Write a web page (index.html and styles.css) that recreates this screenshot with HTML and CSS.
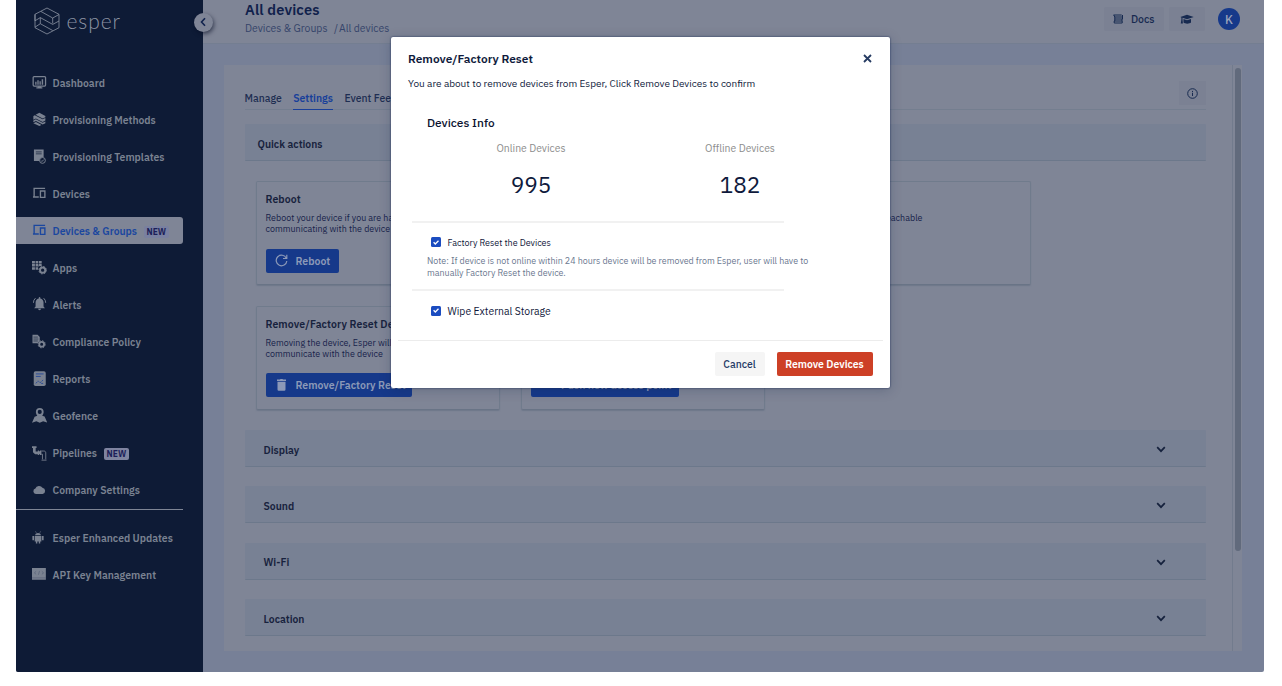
FILE: index.html
```html
<!DOCTYPE html>
<html lang="en">
<head>
<meta charset="utf-8">
<title>Esper - All devices</title>
<link rel="stylesheet" href="styles.css">
</head>
<body>
<div class="app">
  <aside class="sidebar">
    <div class="logo">
      <svg width="26" height="28" viewBox="0 0 26 28" fill="none" stroke="#8d94a3" stroke-width=".8" stroke-linejoin="round"><path d="M1 7.300 13 1l12 6.300v13.400L13 27 1 20.700zM7 4.500l11.700 6.500L25 7.500M18.700 11v5.500M1 7.300v6.500l5.300-3.200 12.400 6.800L25 14M6.300 10.600v6.100M1 20.200l5.300-3.500 12.400 6.800"/></svg>
      <span class="logo-text">esper</span>
    </div>
    <button class="collapse"><svg width="8" height="10" viewBox="0 0 8 10" fill="none" stroke="#10224d" stroke-width="1.600"><path d="M6 1.200 2.500 5 6 8.800"/></svg></button>
    <nav class="nav">
      <a class="item"><svg class="ico" viewBox="0 0 16 16"><rect x="1.200" y="1.600" width="12.800" height="9.800" rx="1" fill="none" stroke="currentColor" stroke-width="1.300"/><path fill="currentColor" d="M3.300 7h1.400v3H3.300zM5.500 5.500h1.400V10H5.500zM7.700 6.500h1.400V10H7.700zM10 4.300h1.500V10H10zM6 11.500h3.500v1.200H6zM4.500 12.700h6.200v1.200H4.500z"/></svg>Dashboard</a>
      <a class="item"><svg class="ico" viewBox="0 0 16 16"><path fill="currentColor" d="M7.600.8 13.800 4v1.300L11 6.600 3.700 2.900zM1.400 4.200l1.500-.8 8 4.100 2.900-1.300v2.700L11 10.300 4 6.700 1.400 8zM1.400 8.900 4 7.600l7 3.600 2.800-1.300v1.600L11 12.900 4.100 9.400l-2.700 1.300zM1.400 11.500l2.700-1.200 5.700 3-2.200 1.100z"/></svg>Provisioning Methods</a>
      <a class="item"><svg class="ico" viewBox="0 0 16 16"><path fill="currentColor" d="M2 .5h10v8.300a3.500 3.500 0 0 0-4 2.200v1.500H2z"/><path stroke="#0e1b36" stroke-width=".7" d="M4 3h6M4 5h6"/><circle cx="10.800" cy="11.800" r="3" fill="#0e1b36" stroke="currentColor"/><path d="m9.300 11.900 1 1 2-2" fill="none" stroke="currentColor"/></svg>Provisioning Templates</a>
      <a class="item"><svg class="ico" viewBox="0 0 16 16" fill="none" stroke="currentColor" stroke-width="1.400"><path d="M13.500 2.500H2.200v8.300M1 11.300h6"/><path d="M8.700 5.200h4.600v6.600H8.700z"/></svg>Devices</a>
      <a class="item active"><svg class="ico" viewBox="0 0 16 16" fill="none" stroke="currentColor" stroke-width="1.400"><path d="M13.500 2.500H2.200v8.300M1 11.300h6"/><path d="M8.700 5.200h4.600v6.600H8.700z"/></svg>Devices &amp; Groups<span class="tag tag-soft">NEW</span></a>
      <a class="item"><svg class="ico" viewBox="0 0 16 16"><path fill="currentColor" d="M0 1h3v2.500H0zM3.700 1h2.600v2.500H3.700zM7 1h3v2.500H7zM0 4.200h3v2.500H0zM3.700 4.200h2.600v2.500H3.700zM7 4.200h3v2H8L6.500 7zM0 7.400h3V10H0zM3.700 7.400h2.600V10H3.700z"/><circle cx="11" cy="10.500" r="2.700" fill="none" stroke="currentColor" stroke-width="2"/><circle cx="11" cy="10.500" r="3.900" fill="none" stroke="currentColor" stroke-dasharray="1.500 1.600"/></svg>Apps</a>
      <a class="item"><svg class="ico" viewBox="0 0 16 16"><path fill="currentColor" d="M7 .8a.8.8 0 0 1 1.600 0v.7c2.200.5 3.300 2.200 3.300 4.300v4l1.500 1.700H2.200L3.700 9.800v-4c0-2.100 1.100-3.800 3.300-4.300zM6.300 12.200h3a1.500 1.500 0 0 1-3 0z"/><path fill="none" stroke="currentColor" d="M3.600 1.200A6 6 0 0 0 1.500 6M12 1.200A6 6 0 0 1 14.100 6"/></svg>Alerts</a>
      <a class="item"><svg class="ico" viewBox="0 0 16 16"><path fill="currentColor" d="M.5.800h5.300L8 3v4L5.800 9.500H.5z"/><path stroke="#0e1b36" stroke-width=".6" d="M1.500 3.200H6M1.500 5.200h5M1.500 7.200H6"/><circle cx="10" cy="10.600" r="2.500" fill="none" stroke="currentColor" stroke-width="1.900"/><circle cx="10" cy="10.600" r="3.700" fill="none" stroke="currentColor" stroke-dasharray="1.500 1.400"/></svg>Compliance Policy</a>
      <a class="item"><svg class="ico" viewBox="0 0 16 16"><rect x="1.800" y=".2" width="12.400" height="15.300" rx="1.800" fill="currentColor"/><path fill="none" stroke="#294b98" d="M4 3h8M4 5.600h5"/><path fill="none" stroke="#294b98" stroke-dasharray="2 .8" d="m4 12.800 2.300-2.600 2 2L12 8.800M9.500 12.800H12"/></svg>Reports</a>
      <a class="item"><svg class="ico" viewBox="0 0 16 16"><path fill="currentColor" fill-rule="evenodd" d="M8 0a4 4 0 0 1 4 4c0 1.500-.7 2.700-1.500 4l2.500.8 2.800 6.400-4.300-1.500L8 15.200l-3.500-1.500L0 15.200 2.700 9l2.800-1C4.700 6.700 4 5.500 4 4a4 4 0 0 1 4-4zm0 1.900a2.100 2.100 0 1 0 0 4.200 2.100 2.100 0 0 0 0-4.200z"/></svg>Geofence</a>
      <a class="item"><svg class="ico" viewBox="0 0 16 16"><path fill="currentColor" d="M0 .3h4.700v1.800h-.9v3.500H6V4.700h1.200v.6h1v-.6h1.500v4.500H8.200v-.6h-1v.6H6v-.6H3.200L1 6.500V2.100H0z"/><path fill="none" stroke="currentColor" stroke-width=".9" d="M9.700 5.200h2.500c1.400 0 2 .7 2 2v6.600M9.700 8.500h1.100v5.300M9.800 14.600h5.200"/></svg>Pipelines<span class="tag">NEW</span></a>
      <a class="item"><svg class="ico" viewBox="0 0 16 16"><path fill="currentColor" d="M4 11.300a2.800 2.800 0 0 1-.5-5.500A4 4 0 0 1 10.800 5 3.200 3.200 0 0 1 11 11.300z"/></svg>Company Settings</a>
    </nav>
    <nav class="nav nav-extra">
      <a class="item"><svg class="ico" viewBox="0 0 16 16"><path fill="currentColor" d="M3 4.500a3.300 3.300 0 0 1 6.400 0zM2.800 5.200h6.900v5.600H8.500V13H7v-2.200H5.500V13H4v-2.200H2.800zM.4 5.200h1.700v4.300H.4zM10.300 5.200H12v4.300h-1.700z"/><path stroke="currentColor" stroke-width=".5" d="m3.500.2 1 1.800M9 .2 8 2"/></svg>Esper Enhanced Updates</a>
      <a class="item"><svg class="ico" viewBox="0 0 16 16"><path fill="currentColor" d="M0 0h14.300v12H0z"/><path fill="none" stroke="#566177" stroke-width=".7" d="M4.200 3.500 2.500 5l1.700 1.500M10.200 3.500 11.900 5l-1.700 1.500M7.800 3 6.600 7M0 10.200h14.300"/></svg>API Key Management</a>
    </nav>
  </aside>

  <main class="main">
    <header class="header">
      <div>
        <h1>All devices</h1>
        <div class="crumbs"><span>Devices &amp; Groups</span><span class="slash">/</span><span>All devices</span></div>
      </div>
      <div class="tools">
        <button class="tool docs"><svg width="10" height="10" viewBox="0 0 10 10" fill="none" stroke="#172a50" stroke-width="1"><path d="M.5 1h8.200M.8 1l1 2h8M9.500 1v4M1.800 3v2h7.700M1.800 5v2M9 5v2M1 7h8M1.200 7v2h8V7"/></svg>Docs</button>
        <button class="tool cap"><svg width="14" height="11" viewBox="0 0 14 11" fill="#172a50"><path d="M7 .8 13.700 3 7 5.300 2.500 3.800v1.500l.4 4.200H.8l.6-4.200V3.500L.3 3zM3.500 5 7 6.300 11 5v3.500C9.500 10 5 10 3.500 8.500z"/></svg></button>
        <span class="avatar">K</span>
      </div>
    </header>
    <div class="panel">
      <div class="content">
        <div class="tabs">
          <span class="tab">Manage</span><span class="tab selected">Settings</span><span class="tab">Event Feed</span>
          <button class="info"><svg width="11" height="11" viewBox="0 0 11 11" fill="none" stroke="#172a50"><circle cx="5.500" cy="5.500" r="4.800"/><path d="M5.500 4.800V8M5.500 2.900v1.200"/></svg></button>
        </div>
        <div class="bar quick">Quick actions</div>
        <div class="cards">
          <section class="card"><h3>Reboot</h3><p>Reboot your device if you are having trouble communicating with the device</p><button class="action"><svg width="13" height="13" viewBox="0 0 13 13" fill="none" stroke="currentColor" stroke-width="1.200"><path d="M11.300 4.200A5.300 5.300 0 1 0 11.800 7M11.800.8v3.700H8"/></svg>Reboot</button></section>
          <section class="card"></section>
          <section class="card"><h3>Ping</h3><p>Check if the device is reachable</p></section>
          <section class="card"><h3>Remove/Factory Reset Device</h3><p>Removing the device, Esper will no longer communicate with the device</p><button class="action wide"><svg width="13" height="13" viewBox="0 0 13 13" fill="currentColor"><path d="M2 .6h3L5.500 0h2L8 .6h3V2H2zM2.500 2.700h8v7.800q0 1.200-1.200 1.200H3.700q-1.200 0-1.200-1.200z"/></svg>Remove/Factory Reset</button></section>
          <section class="card bottom"><button class="action push"><svg width="13" height="13" viewBox="0 0 13 13" fill="none" stroke="currentColor" stroke-width="1.500"><path d="M6.500 1v8M2.500 5h8"/></svg>Push new access point</button></section>
        </div>
        <div class="bars">
          <div class="bar">Display<svg class="chev" viewBox="0 0 10 7"><path d="m1.200 1.200 3.800 4 3.800-4"/></svg></div>
          <div class="bar">Sound<svg class="chev" viewBox="0 0 10 7"><path d="m1.200 1.200 3.800 4 3.800-4"/></svg></div>
          <div class="bar">Wi-Fi<svg class="chev" viewBox="0 0 10 7"><path d="m1.200 1.200 3.800 4 3.800-4"/></svg></div>
          <div class="bar">Location<svg class="chev" viewBox="0 0 10 7"><path d="m1.200 1.200 3.800 4 3.800-4"/></svg></div>
        </div>
      </div>
      <div class="scroll"><div class="thumb"></div></div>
    </div>
  </main>

  <div class="modal" role="dialog">
    <div class="modal-head"><h2>Remove/Factory Reset</h2><svg width="9" height="9" viewBox="0 0 9 9" stroke="#263b62" stroke-width="1.800"><path d="m1 1 7 7M8 1 1 8"/></svg></div>
    <p class="lead">You are about to remove devices from Esper, Click Remove Devices to confirm</p>
    <h4>Devices Info</h4>
    <div class="stats">
      <div><div class="label">Online Devices</div><div class="num">995</div></div>
      <div><div class="label">Offline Devices</div><div class="num">182</div></div>
    </div>
    <div class="option first">
      <div class="check"><span class="box"><svg width="6" height="5" viewBox="0 0 6 5" fill="none" stroke="#fff" stroke-width="1.300"><path d="m.6 2.300 1.700 1.700L5.500.800"/></svg></span>Factory Reset the Devices</div>
      <p class="note">Note: If device is not online within 24 hours device will be removed from Esper, user will have to<br>manually Factory Reset the device.</p>
    </div>
    <div class="option second">
      <div class="check large"><span class="box"><svg width="6" height="5" viewBox="0 0 6 5" fill="none" stroke="#fff" stroke-width="1.300"><path d="m.6 2.300 1.700 1.700L5.500.800"/></svg></span>Wipe External Storage</div>
    </div>
    <div class="foot"><button class="cancel">Cancel</button><button class="danger">Remove Devices</button></div>
  </div>
</div>
</body>
</html>
```

FILE: styles.css
```css
* { box-sizing: border-box; }
body { margin: 0; background: #fff; font-family: "IBM Plex Sans", Roboto, "Noto Sans", sans-serif; color: #15203f; }
h1, h2, h3, h4, p { margin: 0; }
button { font: inherit; border: 0; padding: 0; display: flex; align-items: center; justify-content: center; }
svg { display: block; flex: none; }

.app { position: relative; width: 1248px; height: 672px; margin-left: 16px; display: flex; background: #778097; overflow: hidden; border-radius: 0 0 2px 2px; }

.sidebar { position: relative; width: 187px; flex: none; background: #0e1b36; }
.logo { height: 64px; display: flex; gap: 7px; padding: 7px 0 0 17.500px; }
.logo-text { font: 300 21px/28px Lato, sans-serif; letter-spacing: .9px; color: #8d94a3; }
.collapse { position: absolute; left: 177.500px; top: 12.500px; width: 19px; height: 19px; border-radius: 50%; background: #7f8596; box-shadow: 1px 2px 4px rgba(5, 12, 35, .6); z-index: 2; }
.nav { width: 167px; display: flex; flex-direction: column; gap: 10.050px; padding-bottom: 5px; border-bottom: 1px solid #7e8595; }
.item { height: 27px; display: flex; align-items: center; padding-left: 15.500px; font-size: 10.400px; font-weight: 600; color: #7a8291; white-space: nowrap; }
.nav:not(.nav-extra) { padding-top: 5.300px; }
.nav-extra { padding-top: 15px; border: 0; }
.ico { width: 15.500px; height: 15.500px; margin-right: 5.500px; }
.active { background: #7f8596; color: #1b479f; border-radius: 0 3px 3px 0; }
.tag { margin: 2px 0 0 6.500px; height: 12px; padding: 0 3px; border-radius: 2px; background: #7f84a0; color: #1c1e59; font-size: 8.500px; line-height: 12px; font-weight: 700; }
.tag-soft { background: #7980a0; }

.main { flex: 1; min-width: 0; display: flex; flex-direction: column; }
.header { height: 44px; flex: none; display: flex; justify-content: space-between; background: #7f8596; border-bottom: 1px solid #747e91; padding: 0 24px 0 42px; }
h1 { font-size: 14.600px; line-height: 18px; font-weight: 600; letter-spacing: .15px; color: #10214b; margin-top: 1px; }
.crumbs { display: flex; margin-top: 2px; font-size: 10.450px; line-height: 14px; color: #35446a; }
.slash { margin: 0 1px 0 6.500px; }
.tools { display: flex; align-items: flex-start; padding-top: 7px; font-size: 10.500px; font-weight: 500; color: #172a50; }
.tool { background: #7b8193; height: 24px; border-radius: 2px; color: #172a50; }
.docs { width: 60px; gap: 7.500px; margin-right: 5px; }
.cap { width: 36px; margin-right: 13px; }
.avatar { width: 22px; height: 22px; margin-top: 1px; border-radius: 50%; background: #16398a; color: #98a2ba; font-size: 12px; line-height: 23px; text-align: center; }

.panel { margin: 21px 22px 21px 21px; height: 586px; display: flex; background: #7f8596; }
.content { width: 1009px; flex: none; padding: 15px 26px 0 20.500px; border-right: 1px solid #727b8d; }
.scroll { flex: 1; padding: 3px 0 0 2px; }
.thumb { width: 6px; height: 483px; border-radius: 3px; background: #616a7c; }
.tabs { height: 30px; display: flex; align-items: flex-end; gap: 11.500px; border-bottom: 1px solid #747e8f; font-size: 10.400px; font-weight: 500; color: #1e2e52; }
.tab { height: 20px; line-height: 16px; white-space: nowrap; margin-bottom: -1px; }
.selected { color: #173f9a; font-weight: 600; border-bottom: 1.500px solid #193f99; }
.info { margin: 0 0 4px auto; align-self: flex-end; width: 27px; height: 24px; background: #7b8193; }
.bar { height: 37px; display: flex; align-items: center; justify-content: space-between; padding: 3px 40px 0 19px; background: #788194; border-bottom: 1px solid #6c788b; border-radius: 1px; font-size: 10.400px; font-weight: 600; color: #17223d; }
.quick { margin-top: 14px; padding-left: 13px; }
.chev { width: 10px; height: 7px; fill: none; stroke: #15213c; stroke-width: 1.700; }
.cards { display: grid; grid-template-columns: repeat(3, 244px); grid-auto-rows: 104px; gap: 21px 21.500px; padding: 20px 0 0 11px; }
.card { border: 1px solid #707b8c; border-bottom-color: #697486; border-radius: 2px; padding: 9px 0 0 9px; box-shadow: 0 1px 1px rgba(95, 108, 128, .5); }
.card h3 { font-size: 10.500px; line-height: 16px; font-weight: 600; letter-spacing: .1px; color: #17223d; }
.card p { margin-top: 5px; width: 187px; height: 23px; font-size: 8.900px; line-height: 11.200px; letter-spacing: .03px; color: #17224a; }
.action { margin-top: 13.500px; width: 73px; height: 24px; justify-content: flex-start; padding-left: 9.500px; border-radius: 2px; background: #16398a; color: #8c99b8; font-size: 10.500px; font-weight: 600; gap: 7.500px; white-space: nowrap; }
.wide { width: 146px; margin-top: 13px; }
.push { width: 148px; margin-top: 13px; }
.bottom { padding-top: 53px; }
.bars { display: flex; flex-direction: column; gap: 19.400px; padding-top: 20px; }

.modal { position: absolute; left: 374.500px; top: 37px; width: 499px; height: 350.500px; background: #fff; border-radius: 2px; box-shadow: 0 0 2px #1b2b57, 0 2px 12px rgba(20, 35, 70, .25); z-index: 3; }
.modal-head { display: flex; align-items: center; justify-content: space-between; height: 21px; margin-top: 10.500px; padding: 0 18px 0 17.500px; }
h2 { font-size: 11.900px; font-weight: 600; color: #0f1a3c; }
.lead { margin: 7px 0 0 17.500px; font-size: 10px; line-height: 16px; color: #0f1a3c; }
h4 { margin: 23px 0 0 36.500px; font-size: 11.900px; line-height: 16px; font-weight: 500; color: #0c1330; }
.stats { display: grid; grid-template-columns: 209px 209px; margin: 10.500px 0 0 36px; text-align: center; height: 80px; }
.label { font-size: 10.400px; line-height: 14px; color: #8c8c8c; }
.num { margin-top: 15.500px; font-size: 22.600px; line-height: 28px; color: #0f1a3c; }
.option { margin-left: 21.500px; width: 371.500px; border-top: 2px solid #f1f1f1; padding-left: 15px; }
.first { height: 68px; padding-top: 12.500px; }
.second { height: 51px; padding-top: 13px; }
.check { display: flex; align-items: center; gap: 7px; padding-left: 3.500px; height: 13px; font-size: 8.950px; color: #10173a; }
.box { width: 10px; height: 10px; border-radius: 1.500px; background: #1b4cc0; display: flex; align-items: center; justify-content: center; }
.large { font-size: 10.400px; }
.note { margin-top: 6px; font-size: 8.920px; line-height: 12px; color: #6b7890; white-space: nowrap; }
.foot { margin: 0 7px; display: flex; justify-content: flex-end; gap: 12px; border-top: 1.500px solid #ececec; padding: 11px 10px 0 0; font-size: 10.400px; }
.foot button { height: 24px; border-radius: 2px; }
.cancel { width: 50px; background: #f5f5f5; color: #243a66; font-weight: 500; }
.danger { width: 96px; background: #cd4026; color: #fff; font-weight: 600; }
```
